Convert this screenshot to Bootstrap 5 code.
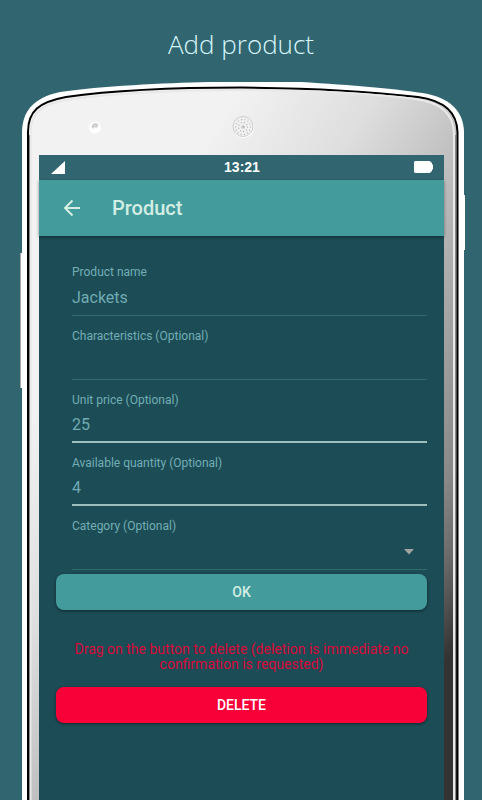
<!DOCTYPE html>
<html lang="en">
<head>
<meta charset="utf-8">
<meta name="viewport" content="width=device-width, initial-scale=1">
<title>Add product</title>
<link href="https://cdn.jsdelivr.net/npm/bootstrap@5.3.0/dist/css/bootstrap.min.css" rel="stylesheet">
<style>
  body { background: #316670; font-family: Roboto, "Liberation Sans", sans-serif; }
  .page-title { font: 300 26px/36px "Open Sans", "Noto Sans", sans-serif; color: #d8f6fc; padding: 26px 0 20px; }
  .phone { padding: 73px 38px 0 39px; }
  .phone-frame { z-index: 0; }
  .screen { z-index: 1; background: #1c4c56; }
  .status { height: 25px; padding: 0 11px 0 12px; background: #316670; color: #fff; font: bold 14px/24px "Liberation Sans", Arial, sans-serif; }
  .status > * { flex: 1 0 0; }
  .toolbar { height: 56px; padding-left: 21px; background: #439b9c; color: #d3eee4; box-shadow: 0 1px 3px rgba(0,0,0,.45); }
  .toolbar h2 { font-size: 20px; line-height: 24px; font-weight: 500; margin: 0 0 0 28px; }
  .back { width: 24px; height: 24px; color: inherit; }
  .product-form { padding: 16px 17px 0; }
  .field { margin-left: 16px; padding-top: 12px; }
  .field label { font-size: 12px; line-height: 16px; color: #73aeb4; }
  .field input, .field select { height: 36px; padding: 0; border: 0; border-bottom: 1px solid #2f6c70; border-radius: 0; background: none; color: #70abb3; font-size: 16px; line-height: 20px; outline: 0; appearance: none; }
  .field .strong-line { height: 35px; border-bottom: 2px solid #9dbfbd; }
  .caret { right: 13px; top: 15px; }
  .action { height: 36px; padding: 0; border: 0; border-radius: 8px; font-size: 14px; line-height: 20px; font-weight: 500; box-shadow: 0 1px 3px rgba(0,0,0,.5); }
  .action-ok { background: #439b9c; color: #d3eee4; margin-top: 4px; }
  .action-delete { background: #f80038; color: #fff; }
  .warning { color: #d8093a; font-size: 14px; line-height: 15px; margin: 32px 0 15px; }
</style>
<script src="https://cdn.jsdelivr.net/npm/bootstrap@5.3.0/dist/js/bootstrap.bundle.min.js"></script>
</head>
<body class="min-vh-100 d-flex flex-column">
<h1 class="page-title text-center m-0">Add product</h1>
<main class="phone position-relative flex-grow-1 d-flex flex-column">
  <svg class="phone-frame position-absolute top-0 start-0 w-100 h-100" viewBox="0 82 482 718" preserveAspectRatio="none" aria-hidden="true">
    <defs>
      <linearGradient id="shell" gradientUnits="userSpaceOnUse" x1="209" y1="134" x2="616" y2="396">
        <stop offset="0" stop-color="#f2f2f2"/><stop offset=".25" stop-color="#dedede"/><stop offset=".46" stop-color="#bdbdbd"/>
        <stop offset=".8" stop-color="#888"/><stop offset=".89" stop-color="#6a6a6a"/><stop offset=".95" stop-color="#4c4c4c"/><stop offset="1" stop-color="#333"/>
      </linearGradient>
    </defs>
    <path d="M20.500 253h3v135h-3zM462 195h3v55h-3z" fill="#fff"/>
    <path d="M20.500 253v135" stroke="#aaa"/>
    <path d="M22 801V131C23 111 33 98 60 92C100 86 165 83 208 82H301C350 85 400 89 428 94C453 100 463 113 464 131V801Z" fill="#fff"/>
    <path d="M28 802V132C28 111 39 102 66 97C115 90 185 87.500 241 87.500C310 88 375 92 418 97C447 101 457 114 457.500 132V802Z" fill="url(#shell)" stroke="#000" stroke-width="2"/>
    <path d="M30.500 802V132C31 113 41 105 66 100C115 93 185 90 241 90C310 90.500 375 94 415 99C444 103 453.500 116 454 134V802" fill="none" stroke="#e8e8e8" stroke-width="2"/>
    <path d="M29.500 802V135M455.500 802V135" stroke="#888"/>
    <circle cx="95" cy="127.500" r="6" fill="#fff"/>
    <path d="M91.500 127a4 4 0 0 1 6-3.500l1 2-2 2.500-2-1-1 2z" fill="#d0d0d0"/>
    <circle cx="243.500" cy="127.500" r="10.500" fill="#fff"/>
    <circle cx="243" cy="126.500" r="10" fill="#f0f0f0" stroke="#cdcdcd"/>
    <g fill="none" stroke="#aaa" stroke-width="1.200" stroke-linecap="round">
      <circle cx="243" cy="127" r="7.500" stroke-dasharray="0 3.366"/><circle cx="243" cy="127" r="4.500" stroke-dasharray="0 3.142"/><circle cx="243" cy="127" r="1.200" stroke-width=".8"/>
    </g>
  </svg>

  <div class="screen position-relative flex-grow-1">
    <div class="status d-flex">
      <span class="d-flex align-items-center"><svg width="14" height="13" viewBox="0 0 14 13" role="img" aria-label="Signal"><path d="M0 13L14 0V13Z" fill="#fff"/></svg></span>
      <span class="text-center">13:21</span>
      <span class="d-flex align-items-center justify-content-end"><svg width="19" height="13" viewBox="0 0 19 13" role="img" aria-label="Battery"><path d="M1 0H16L17 1.500H18V3L19 4V8L18 9V10.500H17L16 12H1L0 11V1Z" fill="#fff"/></svg></span>
    </div>
    <header class="toolbar position-relative d-flex align-items-center">
      <button type="button" class="back btn p-0 border-0 d-flex" aria-label="Back">
        <svg width="24" height="24" viewBox="0 0 24 24"><path d="M20 12H5.500M12.500 4.500L5 12l7.500 7.500" fill="none" stroke="currentColor" stroke-width="2"/></svg>
      </button>
      <h2>Product</h2>
    </header>
    <form class="product-form">
      <div class="field"><label class="d-block" for="name">Product name</label><input class="d-block w-100" id="name" type="text" value="Jackets"></div>
      <div class="field"><label class="d-block" for="traits">Characteristics (Optional)</label><input class="d-block w-100" id="traits" type="text"></div>
      <div class="field"><label class="d-block" for="price">Unit price (Optional)</label><input class="strong-line d-block w-100" id="price" type="text" inputmode="decimal" value="25"></div>
      <div class="field"><label class="d-block" for="quantity">Available quantity (Optional)</label><input class="strong-line d-block w-100" id="quantity" type="text" inputmode="numeric" value="4"></div>
      <div class="field"><label class="d-block" for="category">Category (Optional)</label>
        <div class="position-relative">
          <select class="d-block w-100" id="category"><option value=""></option></select>
          <svg class="caret position-absolute pe-none" width="10" height="6" viewBox="0 0 10 6" aria-hidden="true"><path d="M0 0H10L5 5.500Z" fill="#a1a3a0"/></svg>
        </div>
      </div>
      <button type="submit" class="action action-ok btn w-100">OK</button>
      <p class="warning text-center">Drag on the button to delete (deletion is immediate no confirmation is requested)</p>
      <button type="button" class="action action-delete btn w-100">DELETE</button>
    </form>
  </div>
</main>
</body>
</html>
